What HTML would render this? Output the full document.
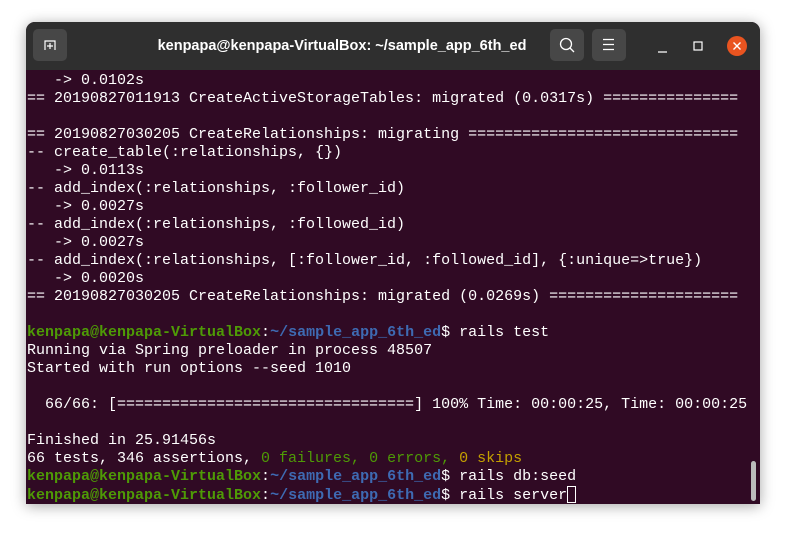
<!DOCTYPE html><html><head><style>
body{margin:0;width:786px;height:533px;background:#fff;overflow:hidden;position:relative}
.win{position:absolute;left:26px;top:22px;width:734px;height:482px;background:#300a24;border-radius:9px 9px 0 0;box-shadow:0 2px 14px rgba(0,0,0,.35);overflow:hidden}
.tb{position:absolute;left:0;top:0;width:734px;height:48px;background:#2f2f2f}
.btn{position:absolute;top:7px;width:34px;height:32px;background:#474747;border-radius:5px}
.title{position:absolute;left:0;width:632px;top:16px;text-align:center;color:#fff;font:bold 14.5px "Liberation Sans",sans-serif;white-space:nowrap}
pre{position:absolute;left:1px;top:50px;margin:0;font:15px/18px "Liberation Mono",monospace;color:#fff}
.g{color:#4e9a06;font-weight:bold}.b{color:#3e6ab2;font-weight:bold}.gn{color:#4e9a06}.y{color:#c4a000}
.cur{display:inline-block;width:9px;height:17px;box-sizing:border-box;border:1.5px solid #fff;vertical-align:-4px}
</style></head><body>
<div class="win">
<div class="tb">
<div class="btn" style="left:7px"><svg width="34" height="32"><path d="M12 21V12h10v9" fill="none" stroke="#fff" stroke-width="1.2"/><path d="M17 14v6M14 17h6" stroke="#fff" stroke-width="1.2"/></svg></div>
<div class="title">kenpapa@kenpapa-VirtualBox: ~/sample_app_6th_ed</div>
<div class="btn" style="left:524px"><svg width="34" height="32"><circle cx="16" cy="15" r="5.5" fill="none" stroke="#fff" stroke-width="1.3"/><path d="M20 19l4 4" stroke="#fff" stroke-width="1.3"/></svg></div>
<div class="btn" style="left:566px"><svg width="34" height="32"><path d="M11 10.5h11M11 15.5h11M11 20.5h11" stroke="#fff" stroke-width="1.2"/></svg></div>
<svg style="position:absolute;left:620px;top:10px" width="110" height="30"><path d="M12 20h9" stroke="#fff" stroke-width="1.2"/><rect x="48" y="10" width="8" height="8" fill="none" stroke="#fff" stroke-width="1.2"/><circle cx="91" cy="14" r="10" fill="#e95420"/><path d="M87.5 10.5l7 7M94.5 10.5l-7 7" stroke="#fff" stroke-width="1.4"/></svg>
</div>
<pre>   -&gt; 0.0102s
== 20190827011913 CreateActiveStorageTables: migrated (0.0317s) ===============

== 20190827030205 CreateRelationships: migrating ==============================
-- create_table(:relationships, {})
   -&gt; 0.0113s
-- add_index(:relationships, :follower_id)
   -&gt; 0.0027s
-- add_index(:relationships, :followed_id)
   -&gt; 0.0027s
-- add_index(:relationships, [:follower_id, :followed_id], {:unique=&gt;true})
   -&gt; 0.0020s
== 20190827030205 CreateRelationships: migrated (0.0269s) =====================

<span class="g">kenpapa@kenpapa-VirtualBox</span>:<span class="b">~/sample_app_6th_ed</span>$ rails test
Running via Spring preloader in process 48507
Started with run options --seed 1010

  66/66: [=================================] 100% Time: 00:00:25, Time: 00:00:25

Finished in 25.91456s
66 tests, 346 assertions, <span class="gn">0 failures, 0 errors, </span><span class="y">0 skips</span>
<span class="g">kenpapa@kenpapa-VirtualBox</span>:<span class="b">~/sample_app_6th_ed</span>$ rails db:seed
<span class="g">kenpapa@kenpapa-VirtualBox</span>:<span class="b">~/sample_app_6th_ed</span>$ rails server<span class="cur"></span></pre>
<div style="position:absolute;left:725px;top:439px;width:5px;height:40px;background:#bbb;border-radius:3px"></div>
</div>
</body></html>
